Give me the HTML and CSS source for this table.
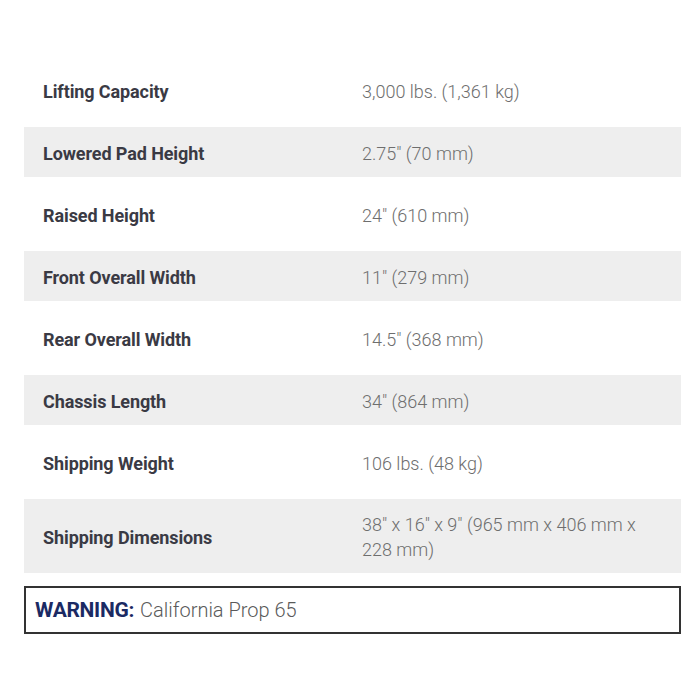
FILE: index.html
```html
<!DOCTYPE html>
<html>
<head>
<meta charset="utf-8">
<link rel="stylesheet" href="styles.css">
</head>
<body>
<div class="page">
  <div class="specs">
    <div class="row"><div class="label">Lifting Capacity</div><div class="value">3,000 lbs. (1,361 kg)</div></div>
    <div class="row alt"><div class="label">Lowered Pad Height</div><div class="value">2.75" (70 mm)</div></div>
    <div class="row"><div class="label">Raised Height</div><div class="value">24" (610 mm)</div></div>
    <div class="row alt"><div class="label">Front Overall Width</div><div class="value">11" (279 mm)</div></div>
    <div class="row"><div class="label">Rear Overall Width</div><div class="value">14.5" (368 mm)</div></div>
    <div class="row alt"><div class="label">Chassis Length</div><div class="value">34" (864 mm)</div></div>
    <div class="row"><div class="label">Shipping Weight</div><div class="value">106 lbs. (48 kg)</div></div>
    <div class="row alt"><div class="label">Shipping Dimensions</div><div class="value">38" x 16" x 9" (965 mm x 406 mm x 228 mm)</div></div>
  </div>
  <div class="warning"><span class="warn-title">WARNING:</span><span class="warn-text">California Prop 65</span></div>
</div>
</body>
</html>
```

FILE: styles.css
```css
html, body {
  margin: 0;
  padding: 0;
  background: #fff;
}
.page {
  padding: 65px 19px 0 24px;
}
.specs {
  display: flex;
  flex-direction: column;
  gap: 12px;
}
.row {
  display: grid;
  grid-template-columns: 319px 1fr;
  align-items: center;
  min-height: 50px;
  box-sizing: border-box;
  padding: 11px 19px;
}
.row.alt {
  background: #eeeeee;
}
.label {
  font-family: Roboto, "Liberation Sans", sans-serif;
  font-weight: bold;
  font-size: 18px;
  letter-spacing: -0.1px;
  color: #3a3a44;
  line-height: 25px;
  padding-top: 2px;
}
.value {
  font-family: Roboto, "Liberation Sans", sans-serif;
  font-weight: 300;
  font-size: 18px;
  color: #6e6e6e;
  line-height: 25px;
  padding-top: 2px;
  padding-right: 10px;
}
.warning {
  margin-top: 13px;
  height: 48px;
  box-sizing: border-box;
  border: 2px solid #333;
  display: flex;
  align-items: center;
  padding: 0 9px;
  gap: 6px;
}
.warn-title {
  font-family: Roboto, "Liberation Sans", sans-serif;
  font-weight: bold;
  font-size: 21px;
  letter-spacing: -0.3px;
  color: #1b2a63;
}
.warn-text {
  font-family: Roboto, "Liberation Sans", sans-serif;
  font-weight: 300;
  font-size: 20px;
  color: #5a5a5a;
}
```
